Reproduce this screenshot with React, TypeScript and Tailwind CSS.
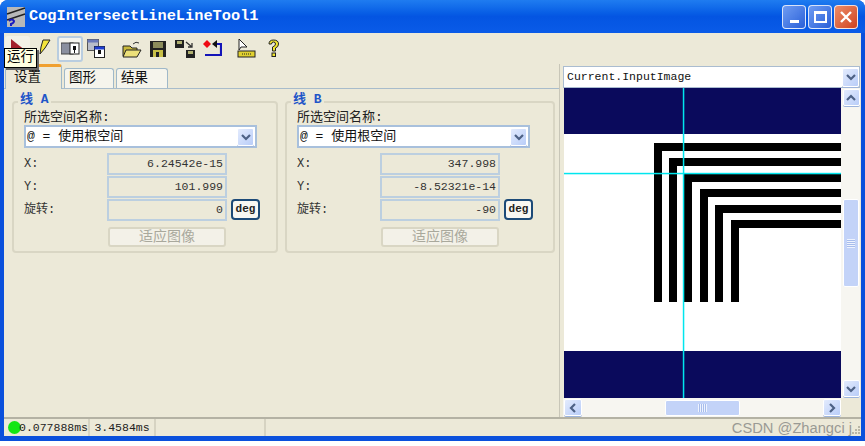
import type { ReactNode } from "react";

const mono = "font-['Liberation_Mono','Noto_Sans_CJK_SC',monospace]";

function Chevron({ dir = "down" }: { dir?: "down" | "up" | "left" | "right" }) {
    const d = {
        down: "M2 4 L6 8 L10 4",
        up: "M2 8 L6 4 L10 8",
        left: "M8 2 L4 6 L8 10",
        right: "M4 2 L8 6 L4 10",
    }[dir];
    return (
        <svg width="12" height="12" viewBox="0 0 12 12">
            <path d={d} fill="none" stroke="#4d6185" strokeWidth="2.2" />
        </svg>
    );
}

function ScrollBtn({ dir, className = "" }: { dir: "down" | "up" | "left" | "right"; className?: string }) {
    return (
        <div className={`flex items-center justify-center rounded-[2px] border border-white bg-gradient-to-br from-[#e3ebfd] to-[#b9cdf8] shadow-[0_1px_0_#9db4dc] ${className}`}>
            <Chevron dir={dir} />
        </div>
    );
}

function TitleButton({ className, children }: { className: string; children: ReactNode }) {
    return (
        <div className={`flex h-[24px] w-[24px] items-center justify-center rounded-[4px] border border-white/80 ${className}`}>
            {children}
        </div>
    );
}

function AppIcon() {
    return (
        <svg width="20" height="22" viewBox="0 0 20 22">
            <rect x="1" y="1" width="18" height="20" fill="#b8b8b8" />
            <path d="M1 8 L19 2 M1 14 L19 8" stroke="#222" strokeWidth="1.4" />
            <path d="M3 15 q3 -3 5 0 q0 2 -3 3 v2" fill="none" stroke="#1a1ac0" strokeWidth="2" />
        </svg>
    );
}

function ToolIcons() {
    return (
        <div className="flex items-center">
            <div className="flex h-[25px] w-[25px] items-start justify-center rounded-[3px] bg-[#f3f1e7] pt-[3px]">
                <svg width="16" height="17" viewBox="0 0 16 17">
                    <path d="M1 0 L16 12 L1 17 Z" fill="#a3202c" />
                </svg>
            </div>
            <svg width="14" height="20" viewBox="0 0 14 20" className="ml-[7px]">
                <path d="M6 1 H13 L8 9 L3 15 L4 8 Z" fill="#f4e43a" stroke="#222" strokeWidth="1" />
            </svg>
            <div className="ml-[6px] flex h-[26px] w-[26px] items-center justify-center rounded-[3px] border-2 border-[#b9cde0] bg-[#f5f4ee]">
                <svg width="19" height="13" viewBox="0 0 19 13">
                    <rect x="0" y="1" width="12" height="11" fill="#8a8fa0" stroke="#444" />
                    <rect x="9" y="1" width="9" height="11" fill="#fff" stroke="#222" />
                    <rect x="12" y="4" width="3" height="4" fill="#111" />
                    <rect x="13" y="8" width="1" height="3" fill="#111" />
                </svg>
            </div>
            <svg width="18" height="19" viewBox="0 0 18 19" className="ml-[4px]">
                <rect x="0.5" y="0.5" width="11" height="11" fill="#b9bdc9" stroke="#555" />
                <rect x="0.5" y="0.5" width="11" height="3" fill="#6a78b8" />
                <rect x="7.5" y="7.5" width="10" height="11" fill="#fff" stroke="#222" />
                <rect x="7.5" y="7.5" width="10" height="3" fill="#1f3ed0" />
                <rect x="11" y="11" width="3" height="4" fill="#111" />
            </svg>
            <svg width="20" height="18" viewBox="0 0 20 18" className="ml-[17px]">
                <path d="M1 6 H8 L10 8 H15 V16 H1 Z" fill="#c8b83c" stroke="#222" />
                <path d="M4 10 H19 L15 17 H1 Z" fill="#ece07a" stroke="#222" />
                <path d="M11 4 q3 -3 6 -1" fill="none" stroke="#333" />
            </svg>
            <svg width="16" height="16" viewBox="0 0 16 16" className="ml-[8px]">
                <rect x="0" y="0" width="16" height="16" fill="#222" />
                <rect x="3" y="1" width="10" height="6" fill="#8c8c5c" />
                <rect x="3" y="9" width="10" height="7" fill="#c8c048" />
                <rect x="6" y="11" width="3" height="5" fill="#222" />
            </svg>
            <svg width="20" height="18" viewBox="0 0 20 18" className="ml-[9px]">
                <rect x="0" y="0" width="9" height="8" fill="#222" />
                <rect x="2" y="1" width="5" height="3" fill="#b0b070" />
                <rect x="11" y="10" width="9" height="8" fill="#222" />
                <rect x="13" y="11" width="5" height="3" fill="#b0b070" />
                <path d="M11 2 L17 7 M17 3 V7 H13" fill="none" stroke="#333" strokeWidth="1.3" />
            </svg>
            <svg width="19" height="17" viewBox="0 0 19 17" className="ml-[8px]">
                <path d="M4 0 L8 4 L4 8 L0 4 Z" fill="#ef0a14" />
                <path d="M12 4 H18 V15 H2" fill="none" stroke="#1414b8" strokeWidth="2.2" />
                <path d="M14 0 L9 4 L14 8 Z" fill="#111" />
            </svg>
            <svg width="19" height="19" viewBox="0 0 19 19" className="ml-[15px]">
                <path d="M2 0 V11 L4 8 H10 Z" fill="#fff" stroke="#222" />
                <rect x="1" y="12" width="17" height="6" fill="#e0d030" stroke="#222" />
                <path d="M5 15 H14" stroke="#222" strokeDasharray="1 1" />
            </svg>
            <svg width="13" height="19" viewBox="0 0 13 19" className="ml-[11px]">
                <path d="M2 5 q0 -4 4.500 -4 q5 0 5 4 q0 3 -3 4 v3 h-3 v-4 q3 -1 3 -3 q0 -2 -2 -2 q-2 0 -2 2 Z" fill="#f2e62e" stroke="#222" strokeWidth="1" />
                <rect x="5" y="14" width="3.500" height="3.500" fill="#f2e62e" stroke="#222" />
            </svg>
        </div>
    );
}

function Tab({ label, active, className = "" }: { label: string; active?: boolean; className?: string }) {
    return (
        <div
            className={`flex items-center rounded-t-[3px] border border-b-0 border-[#9fb8c9] text-[13.500px] leading-none text-[#111] ${
                active
                    ? "relative z-10 -mb-px h-[25px] w-[57px] border-t-[3px] border-t-[#f0a030] bg-[#ece9d8] pl-[8px]"
                    : "h-[20px] bg-[#f5f4ec] pl-[4px]"
            } ${className}`}
        >
            {label}
        </div>
    );
}

function ValueRow({ label, value, deg }: { label: string; value: string; deg?: boolean }) {
    return (
        <div className="flex h-[23px] items-center">
            <span className="w-[83px] text-[12px] leading-none text-[#333]">{label}</span>
            <div className="flex h-[22px] w-[120px] items-center justify-end border-2 border-[#bccfe0] pr-[2px] text-[11.500px] leading-none text-[#333]">
                {value}
            </div>
            {deg && (
                <div className="ml-[4px] flex h-[21px] w-[29px] items-center justify-center rounded-[4px] border-2 border-[#1c4a78] bg-[#f8f7f2] text-[11px] font-bold text-[#222]">
                    deg
                </div>
            )}
        </div>
    );
}

function LineGroup({ name, x, y, rot, className }: { name: string; x: string; y: string; rot: string; className: string }) {
    return (
        <div className={`relative rounded-[4px] border-2 border-[#d9d6c4] pl-[10px] pt-[7px] ${className}`}>
            <span className="absolute -top-[10px] left-[4px] bg-[#ece9d8] px-[2px] text-[13px] font-bold leading-none text-[#1f55c8]">
                {name}
            </span>
            <div className="text-[13px] leading-[15px] text-[#222]">所选空间名称:</div>
            <div className="flex h-[23px] w-[233px] items-center justify-between border-2 border-[#a8c0dc] bg-white pl-[1px] pr-[1px] text-[13px] leading-none text-[#111]">
                <span>@ = 使用根空间</span>
                <ScrollBtn dir="down" className="h-[18px] w-[17px]" />
            </div>
            <div className="mt-[4px] flex flex-col">
                <ValueRow label="X:" value={x} />
                <ValueRow label="Y:" value={y} />
                <ValueRow label="旋转:" value={rot} deg />
            </div>
            <div className="ml-[84px] mt-[6px] flex h-[20px] w-[118px] items-center justify-center rounded-[3px] border-2 border-[#d9d6c4] bg-[#f3f1e8] text-[14px] leading-none text-[#a9a89c]">
                适应图像
            </div>
        </div>
    );
}

function ImageView() {
    const lines = [
        [654, 143],
        [669, 158],
        [684, 174],
        [700, 189],
        [715, 205],
        [731, 220],
    ];
    return (
        <svg width="277" height="310" viewBox="564 88 277 310" className="block">
            <rect x="564" y="88" width="277" height="310" fill="#fff" />
            <rect x="564" y="88" width="277" height="46" fill="#0a0a5c" />
            <rect x="564" y="351" width="277" height="47" fill="#0a0a5c" />
            {lines.map(([x, y]) => (
                <g key={x} fill="#000">
                    <rect x={x} y={y} width="8" height={302 - y} />
                    <rect x={x} y={y} width={841 - x} height="8" />
                </g>
            ))}
            <rect x="682.8" y="88" width="1.5" height="310" fill="#00e6ee" />
            <rect x="564" y="172.8" width="277" height="1.5" fill="#00e6ee" />
        </svg>
    );
}

export default function App() {
    return (
        <div className={`h-[446px] w-[865px] overflow-hidden bg-white ${mono}`}>
            <div className="relative flex h-[441px] w-[865px] flex-col rounded-t-[8px] bg-[#0a50dc]">
                {/* title bar */}
                <div className="flex h-[33px] shrink-0 items-center justify-between rounded-t-[8px] bg-gradient-to-b from-[#1f7cf0] via-[#0455e2] to-[#0a5be8] pl-[6px] pr-[7px]">
                    <div className="flex items-center gap-[3px]">
                        <AppIcon />
                        <span className="text-[15.300px] font-bold leading-none text-white">CogIntersectLineLineTool1</span>
                    </div>
                    <div className="flex gap-[2px]">
                        <TitleButton className="items-end bg-gradient-to-br from-[#6f9cf2] to-[#2a5fd8] pb-[5px]">
                            <div className="h-[3px] w-[9px] bg-white" />
                        </TitleButton>
                        <TitleButton className="bg-gradient-to-br from-[#6f9cf2] to-[#2a5fd8]">
                            <div className="h-[12px] w-[13px] border-2 border-t-[3px] border-white" />
                        </TitleButton>
                        <TitleButton className="bg-gradient-to-br from-[#ec8c68] to-[#d0401c] text-white">
                            <svg width="14" height="14" viewBox="0 0 14 14">
                                <path d="M2 2 L12 12 M12 2 L2 12" stroke="#fff" strokeWidth="2.4" />
                            </svg>
                        </TitleButton>
                    </div>
                </div>

                {/* client area */}
                <div className="mx-[4px] mb-[5px] flex min-h-0 flex-1 flex-col bg-[#ece9d8]">
                    <div className="relative flex h-[31px] shrink-0 items-center pl-[1px]">
                        <ToolIcons />
                        <div className="absolute left-0 top-[15px] z-20 border border-black bg-[#ffffe1] px-[2px] text-[13.500px] leading-[18px] text-black shadow-[2px_2px_0_#666]">
                            运行
                        </div>
                    </div>

                    <div className="flex min-h-0 flex-1">
                        {/* settings panel */}
                        <div className="flex w-[556px] shrink-0 flex-col border-r border-[#c8c6b8]">
                            <div className="flex h-[24px] shrink-0 items-end gap-[2px] pl-[1px]">
                                <Tab label="设置" active />
                                <Tab label="图形" className="w-[50px]" />
                                <Tab label="结果" className="w-[52px]" />
                            </div>
                            <div className="flex flex-1 items-start gap-[7px] border-t border-t-[#a8bccb] pl-[8px] pt-[12px]">
                                <LineGroup name="线 A" x="6.24542e-15" y="101.999" rot="0" className="h-[152px] w-[266px]" />
                                <LineGroup name="线 B" x="347.998" y="-8.52321e-14" rot="-90" className="h-[152px] w-[270px]" />
                            </div>
                        </div>

                        {/* image view */}
                        <div className="ml-[3px] mt-[2px] flex w-[297px] flex-col">
                            <div className="flex h-[22px] shrink-0 items-center justify-between border border-[#aabcd0] bg-white pl-[3px] text-[11.500px] leading-none text-[#111]">
                                <span>Current.InputImage</span>
                                <ScrollBtn dir="down" className="h-[19px] w-[17px]" />
                            </div>
                            <div className="flex h-[310px] shrink-0 pl-px">
                                <ImageView />
                                <div className="flex w-[19px] flex-col items-center bg-[#f7f6f1] pl-[1px] pt-[1px]">
                                    <ScrollBtn dir="up" className="h-[17px] w-[17px]" />
                                    <div className="mt-[93px] flex h-[88px] w-[16px] items-center justify-center rounded-[2px] border border-white bg-[#c3d3f8]">
                                        <div className="h-[9px] w-[8px] bg-[repeating-linear-gradient(to_bottom,#eef3fe_0,#eef3fe_1px,#a8bdec_1px,#a8bdec_2px)]" />
                                    </div>
                                    <ScrollBtn dir="down" className="mt-auto mb-[1px] h-[17px] w-[17px]" />
                                </div>
                            </div>
                            <div className="flex h-[19px] w-[278px] shrink-0 items-center justify-between bg-[#f7f6f1] pl-[1px]">
                                <ScrollBtn dir="left" className="h-[17px] w-[18px]" />
                                <div className="ml-[83px] flex h-[16px] w-[75px] items-center justify-center rounded-[2px] border border-white bg-[#c3d3f8]">
                                    <div className="h-[8px] w-[9px] bg-[repeating-linear-gradient(to_right,#eef3fe_0,#eef3fe_1px,#a8bdec_1px,#a8bdec_2px)]" />
                                </div>
                                <ScrollBtn dir="right" className="ml-auto h-[17px] w-[18px]" />
                            </div>
                        </div>
                    </div>

                    {/* status bar */}
                    <div className="flex h-[19px] shrink-0 items-center border-t-2 border-[#b4b2a4] text-[11.500px] leading-none text-[#222]">
                        <div className="relative flex h-full w-[86px] items-center border-r-2 border-[#d6d3c2] pl-[15px]">
                            <span className="absolute left-[4px] top-[2px] h-[13px] w-[13px] rounded-full bg-[#14e614]" />
                            <span className="relative">0.077888ms</span>
                        </div>
                        <div className="flex h-full w-[66px] items-center justify-center border-r-2 border-[#d6d3c2]">3.4584ms</div>
                        <div className="h-full w-[110px] border-r-2 border-[#d6d3c2]" />
                        <div className="relative h-full flex-1">
                            <span className="absolute bottom-0 right-[9px] font-['Liberation_Sans',sans-serif] text-[14.700px] leading-none text-[#9a9a94]">
                                CSDN @Zhangci j
                            </span>
                            <svg width="9" height="9" viewBox="0 0 9 9" className="absolute bottom-[2px] right-0">
                                <path d="M6 1h2v2h-2z M3 4h2v2h-2z M6 4h2v2h-2z M0 7h2v2h-2z M3 7h2v2h-2z M6 7h2v2h-2z" fill="#b8b6a6" />
                            </svg>
                        </div>
                    </div>
                </div>
            </div>
        </div>
    );
}
